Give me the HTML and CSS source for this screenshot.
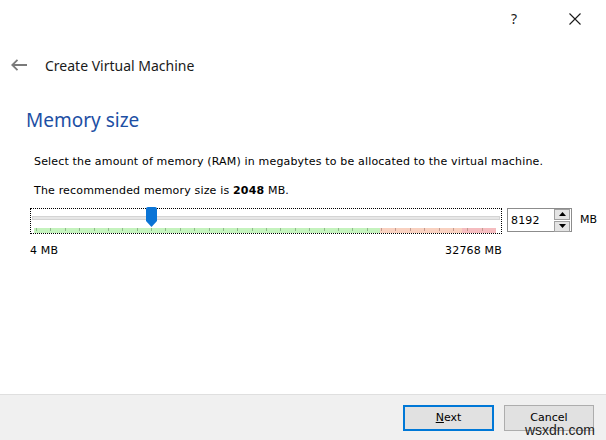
FILE: index.html
```html
<!DOCTYPE html>
<html>
<head>
<meta charset="utf-8">
<link rel="stylesheet" href="styles.css">
</head>
<body>
<div class="window">
  <div class="titlebar">
    <span class="help">?</span>
    <svg class="close" width="12" height="12" viewBox="0 0 12 12"><path d="M0.5 0.5 L11.5 11.5 M11.5 0.5 L0.5 11.5" stroke="#1a1a1a" stroke-width="1.1" fill="none"/></svg>
  </div>
  <div class="header">
    <svg class="back" width="16" height="12" viewBox="0 0 16 12"><path d="M1 6 H16 M6.5 0.8 L1.2 6 L6.5 11.2" stroke="#7a7a7a" stroke-width="1.8" fill="none"/></svg>
    <span class="header-title">Create Virtual Machine</span>
  </div>
  <div class="content">
    <h1 class="page-title">Memory size</h1>
    <p class="text">Select the amount of memory (RAM) in megabytes to be allocated to the virtual machine.</p>
    <p class="text">The recommended memory size is <b>2048</b> MB.</p>
    <div class="slider-row">
      <div class="slider">
        <div class="groove"></div>
        <svg class="band" width="462" height="5" viewBox="0 0 462 5">
          <rect x="0" y="0" width="346" height="5" fill="#c4f3bd"/>
          <rect x="346" y="0" width="82" height="5" fill="#f9d1c0"/>
          <rect x="428" y="0" width="34" height="5" fill="#f5bcbf"/>
          <g id="ticks" stroke-width="1"></g>
        </svg>
        <svg class="handle" width="11" height="20" viewBox="0 0 11 20"><path d="M2 0 H9 Q11 0 11 2 V14 L5.5 20 L0 14 V2 Q0 0 2 0 Z" fill="#0a74d6"/></svg>
      </div>
      <div class="spin">
        <span class="spin-value">8192</span>
        <div class="spin-buttons">
          <div class="spin-btn"><svg width="7" height="4" viewBox="0 0 7 4"><path d="M0 4 L3.5 0 L7 4 Z" fill="#000"/></svg></div>
          <div class="spin-btn"><svg width="7" height="4" viewBox="0 0 7 4"><path d="M0 0 L3.5 4 L7 0 Z" fill="#000"/></svg></div>
        </div>
      </div>
      <span class="unit">MB</span>
    </div>
    <div class="scale"><span>4 MB</span><span>32768 MB</span></div>
  </div>
  <div class="footer">
    <button class="btn btn-default"><u>N</u>ext</button>
    <button class="btn">Cancel</button>
  </div>
  <span class="watermark">wsxdn.com</span>
</div>
<script src="app.js"></script>
</body>
</html>
```
FILE: app.js
```js
var g = document.getElementById('ticks');
var ns = 'http://www.w3.org/2000/svg';
for (var i = 0; i <= 32; i++) {
  var x = Math.round(2 + i * 14.375) + 0.5;
  var l = document.createElementNS(ns, 'line');
  l.setAttribute('x1', x); l.setAttribute('x2', x);
  l.setAttribute('y1', 0); l.setAttribute('y2', 3);
  l.setAttribute('stroke', x < 346 ? '#8fb98a' : '#c39a8e');
  g.appendChild(l);
}
```
FILE: styles.css
```css
html, body { margin: 0; padding: 0; background: #fff; }
.window {
  position: relative;
  width: 606px;
  height: 440px;
  display: flex;
  flex-direction: column;
  font-family: "DejaVu Sans", Verdana, sans-serif;
  color: #000;
}
.titlebar {
  height: 38px;
  display: flex;
  align-items: center;
  justify-content: flex-end;
  padding-right: 25px;
}
.help {
  font-family: "Noto Sans", sans-serif;
  font-size: 14px;
  color: #1a1a1a;
  margin-right: 52px;
  line-height: 14px;
}
.close { display: block; }
.header {
  height: 56px;
  display: flex;
  align-items: center;
  padding-left: 11px;
  margin-top: -1px;
}
.back { display: block; margin-right: 18px; }
.header-title {
  font-family: "Noto Sans", sans-serif;
  font-size: 14px;
  color: #1a1a1a;
}
.content {
  flex: 1;
  padding-left: 26px;
  padding-top: 14px;
}
.page-title {
  margin: 0;
  font-family: "Noto Sans", sans-serif;
  font-weight: normal;
  font-size: 19px;
  color: #1d4fa4;
  line-height: 26px;
}
.text {
  margin: 0 0 0 8px;
  font-size: 11px;
  letter-spacing: 0.17px;
  line-height: 29px;
}
.text:first-of-type { margin-top: 14px; }
.slider-row {
  display: flex;
  align-items: flex-start;
  margin-top: 3px;
  margin-left: 4px;
}
.slider {
  position: relative;
  width: 470px;
  height: 24px;
  border: 1px dotted #000;
  padding: 0;
}
.groove {
  margin: 7px 1px 0 1px;
  height: 2px;
  background: #e7e7e7;
  border: 1px solid #d4d4d4;
}
.band {
  display: block;
  margin: 8px 0 0 3px;
}
.handle {
  position: absolute;
  left: 115px;
  top: -2px;
}
.spin {
  margin-left: 5px;
  width: 60px;
  height: 22px;
  border: 1px solid #8c8c8c;
  display: flex;
  align-items: center;
  justify-content: space-between;
  padding-left: 3px;
  box-sizing: content-box;
}
.spin-value { font-size: 11px; letter-spacing: 0.17px; }
.spin-buttons {
  display: flex;
  flex-direction: column;
  gap: 1px;
  margin-right: 1px;
}
.spin-btn {
  width: 14px;
  height: 9px;
  background: #e4e4e4;
  border: 1px solid #a0a0a0;
  display: flex;
  align-items: center;
  justify-content: center;
}
.spin-btn svg { display: block; }
.unit {
  font-size: 11px;
  margin-left: 8px;
  line-height: 24px;
}
.scale {
  width: 472px;
  margin-left: 4px;
  display: flex;
  justify-content: space-between;
  font-size: 11px;
  letter-spacing: 0.17px;
  line-height: 14px;
  margin-top: 10px;
}
.footer {
  height: 46px;
  background: #f0f0f0;
  border-top: 1px solid #dfdfdf;
  display: flex;
  justify-content: flex-end;
  align-items: flex-start;
  padding: 10px 12px 0 0;
  box-sizing: border-box;
  gap: 10px;
}
.btn {
  width: 90px;
  height: 26px;
  border: 1px solid #adadad;
  background: #e1e1e1;
  font-family: "DejaVu Sans", Verdana, sans-serif;
  font-size: 11px;
  line-height: 12px;
  color: #000;
  padding: 0;
  margin: 0;
}
.btn-default {
  border: 2px solid #0078d7;
  width: 91px;
}
.watermark {
  position: absolute;
  right: 11px;
  bottom: 3px;
  font-family: "Liberation Sans", Arial, sans-serif;
  font-size: 14px;
  line-height: 13px;
  color: #222;
}
```
